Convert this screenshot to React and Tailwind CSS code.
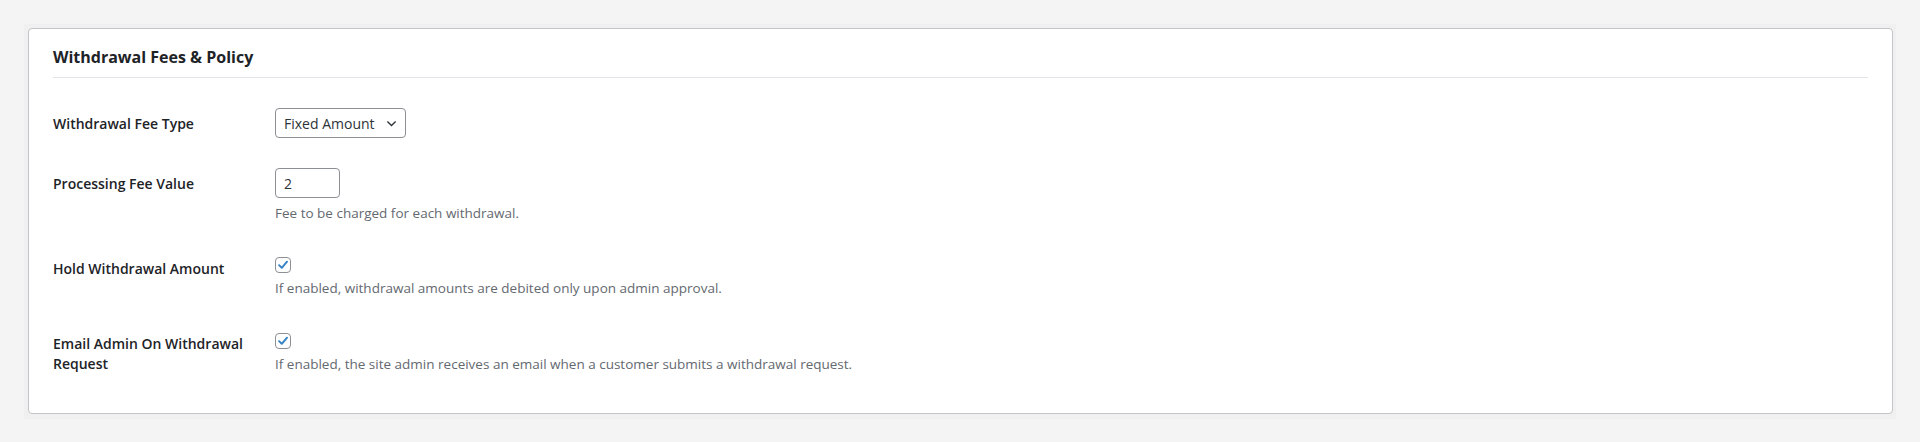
import React, { useState } from "react";

const font = { fontFamily: '"Open Sans", "Noto Sans", sans-serif' };

function Check({ checked, onChange }) {
  return (
    <button
      type="button"
      onClick={onChange}
      className="w-4 h-4 rounded-[4px] border border-[#8c8f94] bg-white flex items-center justify-center"
    >
      {checked && (
        <svg viewBox="0 0 16 16" className="w-[14px] h-[14px]">
          <path
            d="M3.5 8.2 L6.6 11.2 L12.6 4.2"
            fill="none"
            stroke="#3582c4"
            strokeWidth="2.2"
            strokeLinecap="round"
            strokeLinejoin="round"
          />
        </svg>
      )}
    </button>
  );
}

export default function App() {
  const [feeType, setFeeType] = useState("fixed");
  const [fee, setFee] = useState("2");
  const [hold, setHold] = useState(true);
  const [email, setEmail] = useState(true);

  return (
    <div
      className="min-h-[442px] bg-[#f4f4f5] px-6 pt-6 text-[#1d2327]"
      style={{ fontFamily: '"Open Sans", "Noto Sans", sans-serif' }}
    >
      <div className="bg-[#f0f0f1] p-[4px] pr-[3px] pb-[5px]">
        <div className="bg-white border border-[#c3c4c7] rounded-[4px] px-6 pt-[16px] pb-[39px]">
          <h2 className="text-[16px] leading-6 font-bold pb-2 border-b border-[#e2e4e7]">
            Withdrawal Fees &amp; Policy
          </h2>

          {/* Fee type */}
          <div className="flex mt-[30px]">
            <div className="w-[222px] shrink-0 pt-[6px]">
              <span className="block w-[200px] text-[14px] leading-5 font-semibold">
                Withdrawal Fee Type
              </span>
            </div>
            <div className="relative">
              <select
                value={feeType}
                onChange={(e) => setFeeType(e.target.value)}
                className="appearance-none w-[131px] h-[30px] pl-2 pr-6 border border-[#8c8f94] rounded-[4px] bg-white text-[14px] text-[#2c3338] outline-none"
                style={font}
              >
                <option value="fixed">Fixed Amount</option>
                <option value="percent">Percentage</option>
              </select>
              <svg
                viewBox="0 0 12 12"
                className="absolute right-[9px] top-[10px] w-[11px] h-[11px] pointer-events-none"
              >
                <path d="M1.5 3.8 L6 8.2 L10.5 3.8" fill="none" stroke="#2c3338" strokeWidth="1.4" />
              </svg>
            </div>
          </div>

          {/* Processing fee */}
          <div className="flex mt-[30px]">
            <div className="w-[222px] shrink-0 pt-[6px]">
              <span className="block w-[200px] text-[14px] leading-5 font-semibold">
                Processing Fee Value
              </span>
            </div>
            <div>
              <input
                type="text"
                value={fee}
                onChange={(e) => setFee(e.target.value)}
                className="w-[65px] h-[30px] px-2 border border-[#8c8f94] rounded-[4px] bg-white text-[14px] text-[#2c3338] outline-none"
                style={font}
              />
              <p className="mt-[5px] text-[13.5px] leading-5 text-[#646970]">
                Fee to be charged for each withdrawal.
              </p>
            </div>
          </div>

          {/* Hold */}
          <div className="flex mt-[34px]">
            <div className="w-[222px] shrink-0 pt-[2px]">
              <span className="block w-[200px] text-[14px] leading-5 font-semibold">
                Hold Withdrawal Amount
              </span>
            </div>
            <div>
              <Check checked={hold} onChange={() => setHold(!hold)} />
              <p className="mt-[5px] text-[13.5px] leading-5 text-[#646970]">
                If enabled, withdrawal amounts are debited only upon admin approval.
              </p>
            </div>
          </div>

          {/* Email */}
          <div className="flex mt-[35px]">
            <div className="w-[222px] shrink-0 pt-px">
              <span className="block w-[200px] text-[14px] leading-5 font-semibold">
                Email Admin On Withdrawal Request
              </span>
            </div>
            <div>
              <Check checked={email} onChange={() => setEmail(!email)} />
              <p className="mt-[5px] text-[13.5px] leading-5 text-[#646970]">
                If enabled, the site admin receives an email when a customer submits a withdrawal request.
              </p>
            </div>
          </div>
        </div>
      </div>
    </div>
  );
}
